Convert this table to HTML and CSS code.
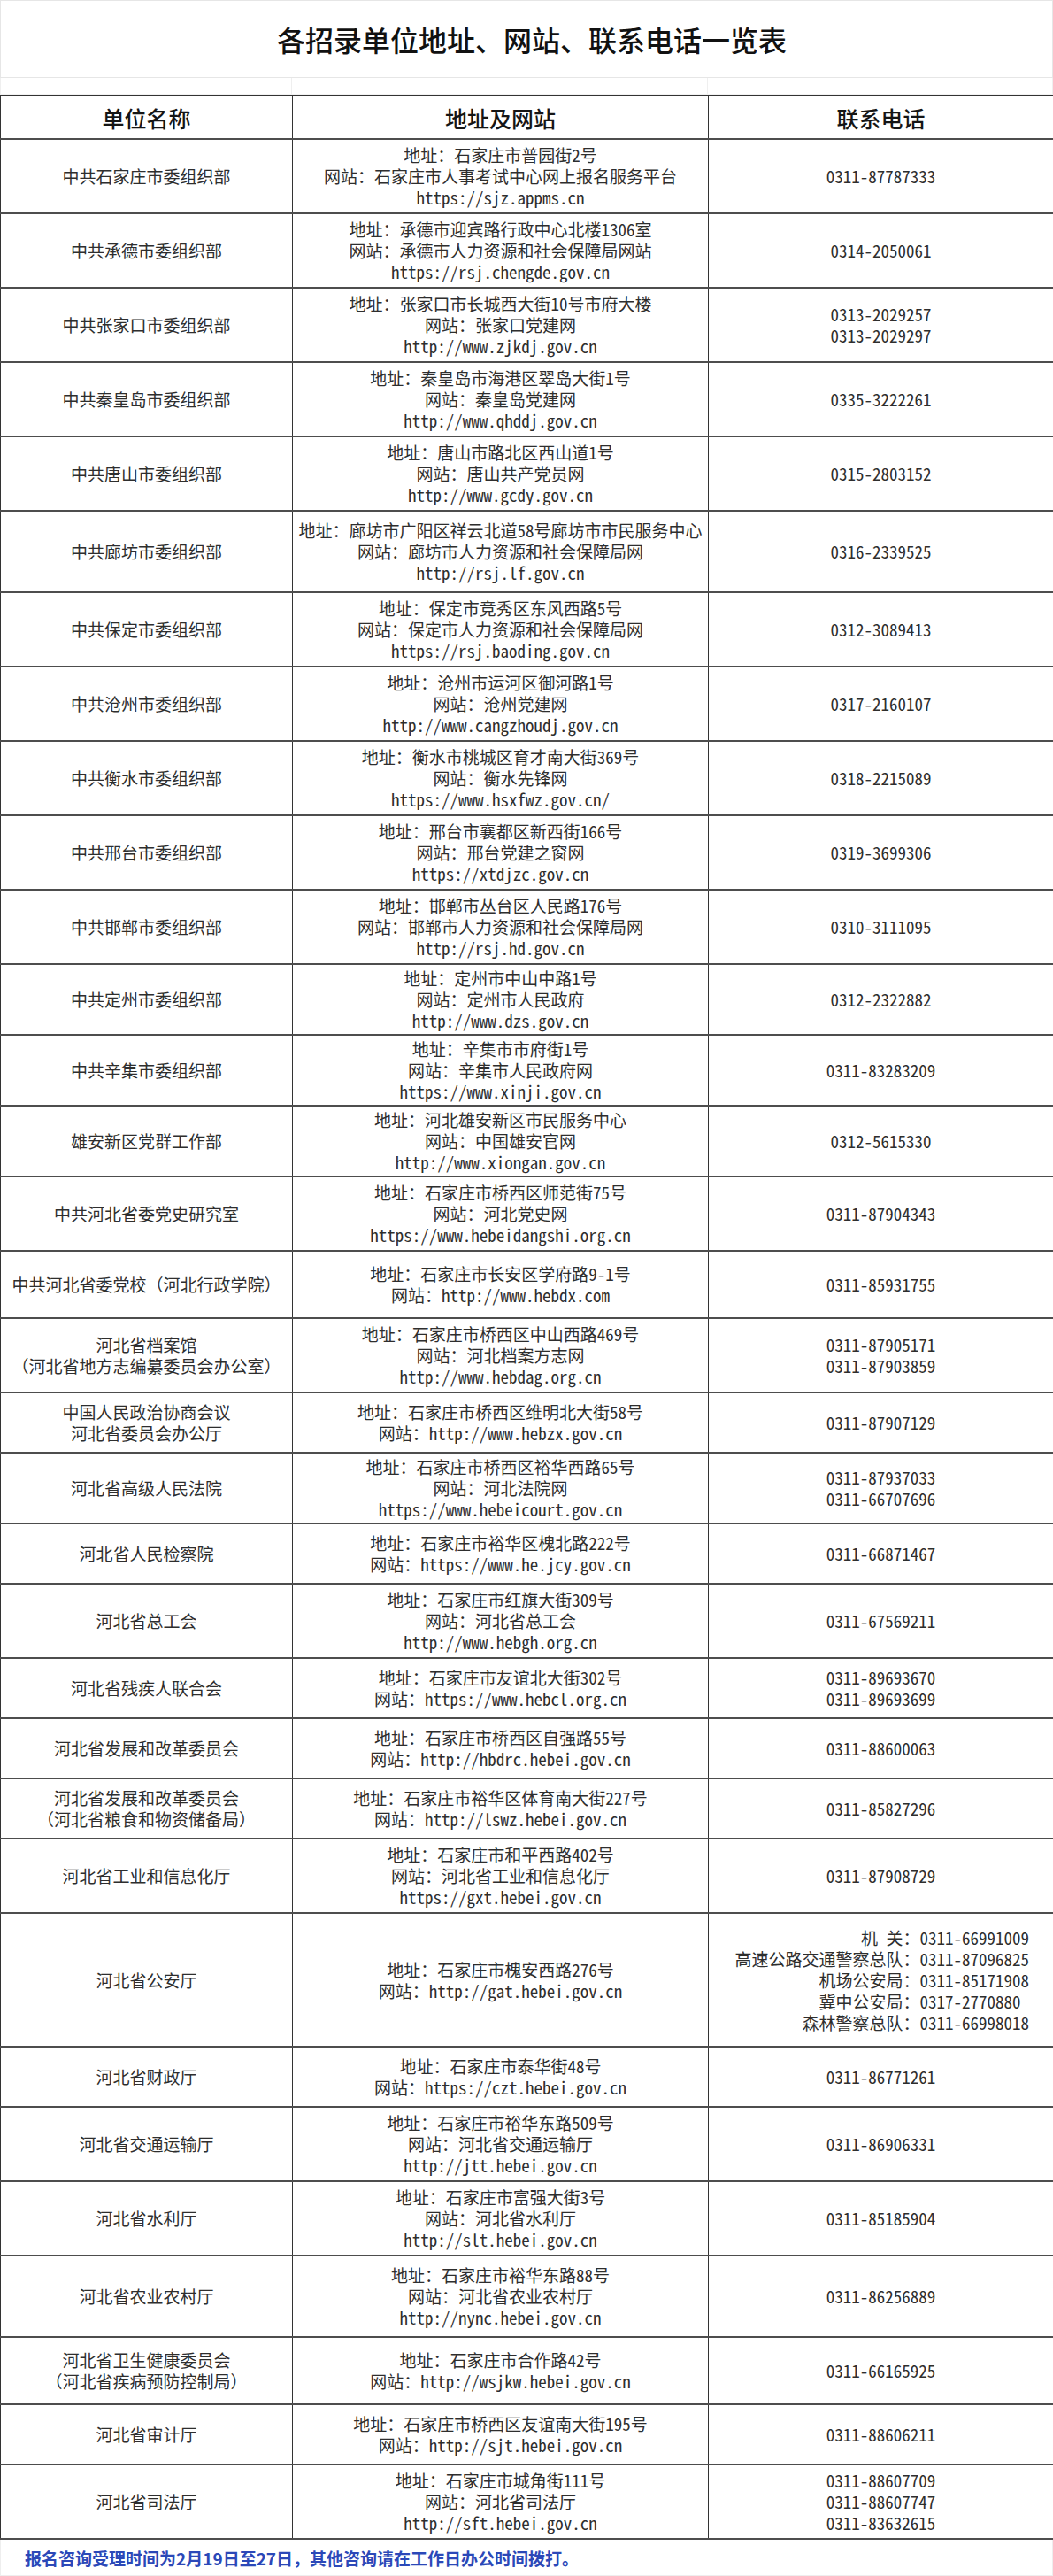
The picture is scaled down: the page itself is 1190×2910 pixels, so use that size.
FILE: index.html
```html
<!DOCTYPE html>
<html lang="zh-CN">
<head>
<meta charset="utf-8">
<title>各招录单位地址、网站、联系电话一览表</title>
<link rel="stylesheet" href="styles.css">
</head>
<body>
<div class="sheet">
  <div class="title">各招录单位地址、网站、联系电话一览表</div>
  <div class="gap"><span class="g1"></span><span class="g2"></span><span class="g3"></span></div>
  <table class="list">
    <colgroup><col class="c1"><col class="c2"><col class="c3"></colgroup>
    <thead>
      <tr class="head"><th>单位名称</th><th>地址及网站</th><th>联系电话</th></tr>
    </thead>
    <tbody>
      <tr class="r3"><td>中共石家庄市委组织部</td><td>地址：石家庄市普园街2号<br>网站：石家庄市人事考试中心网上报名服务平台<br>https://sjz.appms.cn</td><td>0311-87787333</td></tr>
      <tr class="r3"><td>中共承德市委组织部</td><td>地址：承德市迎宾路行政中心北楼1306室<br>网站：承德市人力资源和社会保障局网站<br>https://rsj.chengde.gov.cn</td><td>0314-2050061</td></tr>
      <tr class="r3"><td>中共张家口市委组织部</td><td>地址：张家口市长城西大街10号市府大楼<br>网站：张家口党建网<br>http://www.zjkdj.gov.cn</td><td>0313-2029257<br>0313-2029297</td></tr>
      <tr class="r3"><td>中共秦皇岛市委组织部</td><td>地址：秦皇岛市海港区翠岛大街1号<br>网站：秦皇岛党建网<br>http://www.qhddj.gov.cn</td><td>0335-3222261</td></tr>
      <tr class="r3"><td>中共唐山市委组织部</td><td>地址：唐山市路北区西山道1号<br>网站：唐山共产党员网<br>http://www.gcdy.gov.cn</td><td>0315-2803152</td></tr>
      <tr class="r3 tall"><td>中共廊坊市委组织部</td><td>地址：廊坊市广阳区祥云北道58号廊坊市市民服务中心<br>网站：廊坊市人力资源和社会保障局网<br>http://rsj.lf.gov.cn</td><td>0316-2339525</td></tr>
      <tr class="r3"><td>中共保定市委组织部</td><td>地址：保定市竞秀区东风西路5号<br>网站：保定市人力资源和社会保障局网<br>https://rsj.baoding.gov.cn</td><td>0312-3089413</td></tr>
      <tr class="r3"><td>中共沧州市委组织部</td><td>地址：沧州市运河区御河路1号<br>网站：沧州党建网<br>http://www.cangzhoudj.gov.cn</td><td>0317-2160107</td></tr>
      <tr class="r3"><td>中共衡水市委组织部</td><td>地址：衡水市桃城区育才南大街369号<br>网站：衡水先锋网<br>https://www.hsxfwz.gov.cn/</td><td>0318-2215089</td></tr>
      <tr class="r3"><td>中共邢台市委组织部</td><td>地址：邢台市襄都区新西街166号<br>网站：邢台党建之窗网<br>https://xtdjzc.gov.cn</td><td>0319-3699306</td></tr>
      <tr class="r3"><td>中共邯郸市委组织部</td><td>地址：邯郸市丛台区人民路176号<br>网站：邯郸市人力资源和社会保障局网<br>http://rsj.hd.gov.cn</td><td>0310-3111095</td></tr>
      <tr class="r3 short"><td>中共定州市委组织部</td><td>地址：定州市中山中路1号<br>网站：定州市人民政府<br>http://www.dzs.gov.cn</td><td>0312-2322882</td></tr>
      <tr class="r3 short"><td>中共辛集市委组织部</td><td>地址：辛集市市府街1号<br>网站：辛集市人民政府网<br>https://www.xinji.gov.cn</td><td>0311-83283209</td></tr>
      <tr class="r3 short"><td>雄安新区党群工作部</td><td>地址：河北雄安新区市民服务中心<br>网站：中国雄安官网<br>http://www.xiongan.gov.cn</td><td>0312-5615330</td></tr>
      <tr class="r3"><td>中共河北省委党史研究室</td><td>地址：石家庄市桥西区师范街75号<br>网站：河北党史网<br>https://www.hebeidangshi.org.cn</td><td>0311-87904343</td></tr>
      <tr class="r2 mid"><td>中共河北省委党校（河北行政学院）</td><td>地址：石家庄市长安区学府路9-1号<br>网站：http://www.hebdx.com</td><td>0311-85931755</td></tr>
      <tr class="r3"><td>河北省档案馆<br>（河北省地方志编纂委员会办公室）</td><td>地址：石家庄市桥西区中山西路469号<br>网站：河北档案方志网<br>http://www.hebdag.org.cn</td><td>0311-87905171<br>0311-87903859</td></tr>
      <tr class="r2"><td>中国人民政治协商会议<br>河北省委员会办公厅</td><td>地址：石家庄市桥西区维明北大街58号<br>网站：http://www.hebzx.gov.cn</td><td>0311-87907129</td></tr>
      <tr class="r3 short"><td>河北省高级人民法院</td><td>地址：石家庄市桥西区裕华西路65号<br>网站：河北法院网<br>https://www.hebeicourt.gov.cn</td><td>0311-87937033<br>0311-66707696</td></tr>
      <tr class="r2"><td>河北省人民检察院</td><td>地址：石家庄市裕华区槐北路222号<br>网站：https://www.he.jcy.gov.cn</td><td>0311-66871467</td></tr>
      <tr class="r3"><td>河北省总工会</td><td>地址：石家庄市红旗大街309号<br>网站：河北省总工会<br>http://www.hebgh.org.cn</td><td>0311-67569211</td></tr>
      <tr class="r2"><td>河北省残疾人联合会</td><td>地址：石家庄市友谊北大街302号<br>网站：https://www.hebcl.org.cn</td><td>0311-89693670<br>0311-89693699</td></tr>
      <tr class="r2"><td>河北省发展和改革委员会</td><td>地址：石家庄市桥西区自强路55号<br>网站：http://hbdrc.hebei.gov.cn</td><td>0311-88600063</td></tr>
      <tr class="r2"><td>河北省发展和改革委员会<br>（河北省粮食和物资储备局）</td><td>地址：石家庄市裕华区体育南大街227号<br>网站：http://lswz.hebei.gov.cn</td><td>0311-85827296</td></tr>
      <tr class="r3"><td>河北省工业和信息化厅</td><td>地址：石家庄市和平西路402号<br>网站：河北省工业和信息化厅<br>https://gxt.hebei.gov.cn</td><td>0311-87908729</td></tr>
      <tr class="r5"><td>河北省公安厅</td><td>地址：石家庄市槐安西路276号<br>网站：http://gat.hebei.gov.cn</td><td class="multi">机 关：0311-66991009<br>高速公路交通警察总队：0311-87096825<br>机场公安局：0311-85171908<br>冀中公安局：0317-2770880 <br>森林警察总队：0311-66998018</td></tr>
      <tr class="r2"><td>河北省财政厅</td><td>地址：石家庄市泰华街48号<br>网站：https://czt.hebei.gov.cn</td><td>0311-86771261</td></tr>
      <tr class="r3"><td>河北省交通运输厅</td><td>地址：石家庄市裕华东路509号<br>网站：河北省交通运输厅<br>http://jtt.hebei.gov.cn</td><td>0311-86906331</td></tr>
      <tr class="r3"><td>河北省水利厅</td><td>地址：石家庄市富强大街3号<br>网站：河北省水利厅<br>http://slt.hebei.gov.cn</td><td>0311-85185904</td></tr>
      <tr class="r3 tall"><td>河北省农业农村厅</td><td>地址：石家庄市裕华东路88号<br>网站：河北省农业农村厅<br>http://nync.hebei.gov.cn</td><td>0311-86256889</td></tr>
      <tr class="r2 mid"><td>河北省卫生健康委员会<br>（河北省疾病预防控制局）</td><td>地址：石家庄市合作路42号<br>网站：http://wsjkw.hebei.gov.cn</td><td>0311-66165925</td></tr>
      <tr class="r2"><td>河北省审计厅</td><td>地址：石家庄市桥西区友谊南大街195号<br>网站：http://sjt.hebei.gov.cn</td><td>0311-88606211</td></tr>
      <tr class="r3"><td>河北省司法厅</td><td>地址：石家庄市城角街111号<br>网站：河北省司法厅<br>http://sft.hebei.gov.cn</td><td>0311-88607709<br>0311-88607747<br>0311-83632615</td></tr>
    </tbody>
  </table>
  <div class="note">报名咨询受理时间为2月19日至27日，其他咨询请在工作日办公时间拨打。</div>
</div>
</body>
</html>
```

FILE: styles.css
```css
* { box-sizing: border-box; }
html, body { margin: 0; padding: 0; background: #fff; }
body {
  font-family: "Noto Sans Mono CJK SC", "Noto Sans CJK SC", sans-serif;
  color: #2e2e2e;
}
.sheet { width: 1190px; }
.title {
  height: 88px;
  border: 1px solid #e6e6e6;
  display: flex;
  align-items: center;
  justify-content: center;
  font-family: "Noto Sans CJK SC", sans-serif;
  font-size: 32px;
  font-weight: 500;
  color: #111;
  padding-left: 12px;
}
.gap {
  height: 19px;
  display: grid;
  grid-template-columns: 330px 470px 390px;
}
.gap span { border-right: 1px solid #efefef; border-bottom: 1px solid #f2f2f2; }
.gap .g1 { border-left: 1px solid #efefef; }
.list {
  width: 1190px;
  table-layout: fixed;
  border-collapse: collapse;
}
.c1 { width: 330px; }
.c2 { width: 470px; }
.c3 { width: 390px; }
.list th, .list td {
  border-left: 1px solid #333;
  border-right: 1px solid #333;
  border-top: 2px solid #4d4d4d;
  border-bottom: 2px solid #4d4d4d;
  text-align: center;
  vertical-align: middle;
  padding: 0 3px;
}
.head th {
  height: 49px;
  font-family: "Noto Sans CJK SC", sans-serif;
  font-size: 25px;
  font-weight: 500;
  color: #151515;
  border-top: 2px solid #333;
}
.list td {
  font-size: 19px;
  line-height: 24px;
  white-space: pre;
}
.list td.multi { text-align: right; padding-right: 27px; }
tr.r3 td { height: 84px; }
tr.r3.tall td { height: 92px; }
tr.r3.short td { height: 80px; }
tr.r2 td { height: 68px; }
tr.r2.mid td { height: 76px; }
tr.r5 td { height: 151px; }
.note {
  height: 41px;
  display: flex;
  align-items: center;
  padding-left: 27px;
  font-family: "Noto Sans CJK SC", sans-serif;
  font-size: 19px;
  font-weight: 700;
  color: #2b48b8;
  border-left: 1px solid #eee;
  border-right: 1px solid #eee;
  border-bottom: 1px solid #eee;
}
```
